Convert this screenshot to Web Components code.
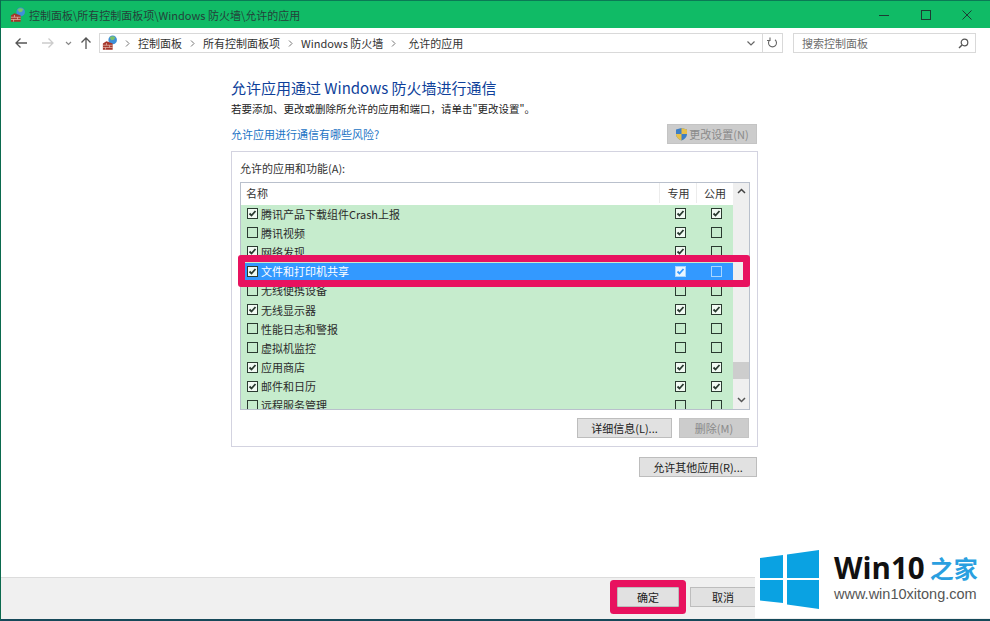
<!DOCTYPE html>
<html lang="zh">
<head>
<meta charset="utf-8">
<title>允许的应用</title>
<style>
  html, body { margin: 0; height: 100%; overflow: hidden; background: #fff; }
  body { font: 11px "Noto Sans CJK SC", "Liberation Sans", sans-serif; color: #222; }
</style>
</head>
<body>
<fw-window></fw-window>
<script>
const FONT = '"Noto Sans CJK SC", "Liberation Sans", sans-serif'

const FIREWALL_ICON = `
  <svg width="16" height="16" viewBox="0 0 18 18">
    <circle cx="12" cy="5.500" r="4.800" fill="#3f8fd8"/>
    <path d="M8.500 3c2-1.800 4.500-2 6.500-.2l-1.600 2.600-2.800.4z" fill="#7cc16a"/>
    <path d="M1 9.500l4-2.500 7 2.500V16.500H1z" fill="#a5352a"/>
    <path d="M1 11.500h11M1 14h11M5 9v2.500M8.500 11.500V14M4 14v2.500" stroke="#e6c3b4" stroke-width=".8" fill="none"/>
  </svg>`

class FwButton extends HTMLElement {
  constructor () {
    super()
    this.attachShadow({ mode: 'open' }).innerHTML = `
      <style>
        :host { display: inline-flex; align-items: center; justify-content: center; box-sizing: border-box;
          height: 20px; background: #e1e1e1; border: 1px solid #bdbdbd; font-size: 11px; color: #222; gap: 1px; }
        :host([disabled]) { background: #ccc; border-color: #c4c4c4; color: #8a8a8a; }
        :host([marked]) { box-shadow: 0 0 0 7px #e8125f; border-radius: 1px; }
      </style>
      <slot name="icon"></slot><slot></slot>`
  }
}
customElements.define('fw-button', FwButton)

class FwCheck extends HTMLElement {
  constructor () {
    super()
    const on = this.hasAttribute('on')
    this.attachShadow({ mode: 'open' }).innerHTML = `
      <style>
        :host { display: block; width: 11px; height: 11px; color: #2a3a30; }
        svg { display: block; }
      </style>
      <svg width="11" height="11" viewBox="0 0 11 11">
        <rect x=".5" y=".5" width="10" height="10" style="fill: ${on ? 'var(--box-fill, rgba(255,255,255,.75))' : 'none'}" stroke="currentColor"/>
        ${on ? '<path d="M2.500 5.500l2 2 4-4.500" fill="none" style="stroke: var(--tick, currentColor)" stroke-width="1.800"/>' : ''}
      </svg>`
  }
}
customElements.define('fw-check', FwCheck)

class FwRow extends HTMLElement {
  constructor () {
    super()
    const flag = (name) => this.getAttribute(name) === '1' ? 'on' : ''
    this.attachShadow({ mode: 'open' }).innerHTML = `
      <style>
        :host { display: grid; grid-template-columns: 1fr 37px 36px; align-items: center; height: 19.200px;
          box-sizing: border-box; padding-bottom: 2px; background: #c6eccd; color: #2b2b2b; white-space: nowrap; }
        :host([selected]) { background: #3399ff; color: #fff; }
        :host([selected]) fw-check.app { background: #c6eccd; color: #2a3a30; }
        :host([selected]) fw-check.col { color: #a9d6ff; --box-fill: #eaf5ff; --tick: #3399ff; }
        .name { display: flex; align-items: center; gap: 3px; padding-left: 6px; }
        fw-check.col { justify-self: center; margin-left: 3px; }
      </style>
      <div class="name"><fw-check class="app" ${flag('app')}></fw-check><slot></slot></div>
      <fw-check class="col" ${flag('a')}></fw-check>
      <fw-check class="col" ${flag('b')}></fw-check>`
  }
}
customElements.define('fw-row', FwRow)

class FwAppList extends HTMLElement {
  constructor () {
    super()
    this.attachShadow({ mode: 'open' }).innerHTML = `
      <style>
        :host { display: block; position: relative; box-sizing: border-box; height: 228px; border: 1px solid #b9c0cc; }
        .frame { display: grid; grid-template-columns: 1fr 16px; height: 100%; }
        .body { display: flex; flex-direction: column; overflow: hidden; min-width: 0; }
        .head { flex: none; display: grid; grid-template-columns: 1fr 37px 36px; height: 22px; box-sizing: border-box; padding-bottom: 2px; background: #fff; color: #333; }
        .head div { display: flex; align-items: center; justify-content: center; }
        .head div + div { box-shadow: -1px 0 0 #ececec; }
        .head div:first-child { justify-content: flex-start; padding-left: 5px; }
        .rows { flex: 1; overflow: hidden; }
        .bar { background: #efefef; display: flex; flex-direction: column; align-items: center; justify-content: space-between; padding: 5px 0 6px; box-sizing: border-box; }
        .thumb { width: 100%; height: 17px; background: #cdcdcd; margin: auto 0 18px; }
        .mark { position: absolute; left: -3px; right: -1px; top: 72px; height: 32px; box-sizing: border-box;
          border: 7px solid #e8125f; border-radius: 3px; }
      </style>
      <div class="frame">
        <div class="body">
          <div class="head"><div>名称</div><div>专用</div><div>公用</div></div>
          <div class="rows"><slot></slot></div>
        </div>
        <div class="bar">
          <svg width="9" height="6" viewBox="0 0 9 6"><path d="M1 5l3.500-3.500L8 5" fill="none" stroke="#444" stroke-width="1.500"/></svg>
          <div class="thumb"></div>
          <svg width="9" height="6" viewBox="0 0 9 6"><path d="M1 1l3.500 3.500L8 1" fill="none" stroke="#555" stroke-width="1.500"/></svg>
        </div>
      </div>
      <div class="mark"></div>`
  }
}
customElements.define('fw-app-list', FwAppList)

class FwTitleBar extends HTMLElement {
  constructor () {
    super()
    this.attachShadow({ mode: 'open' }).innerHTML = `
      <style>
        :host { flex: none; display: flex; align-items: center; height: 28px; box-sizing: border-box; border-top: 1px solid #0b7a55;
          background: #10bb66; color: #24413a; padding-left: 9px; gap: 3px; }
        .text { flex: 1; }
        .ctl { width: 41.500px; height: 27px; display: flex; align-items: center; justify-content: center; }
        .ctls { display: flex; margin-right: 2px; }
      </style>
      ${FIREWALL_ICON}
      <div class="text">控制面板\\所有控制面板项\\Windows 防火墙\\允许的应用</div>
      <div class="ctls">
        <div class="ctl"><svg width="10" height="10" viewBox="0 0 10 10"><path d="M0 5.500h10" stroke="#1d3b33"/></svg></div>
        <div class="ctl"><svg width="10" height="10" viewBox="0 0 10 10"><rect x=".5" y=".5" width="9" height="9" fill="none" stroke="#1d3b33"/></svg></div>
        <div class="ctl"><svg width="10" height="10" viewBox="0 0 10 10"><path d="M.5.5l9 9M9.500.5l-9 9" stroke="#1d3b33" fill="none"/></svg></div>
      </div>`
  }
}
customElements.define('fw-title-bar', FwTitleBar)

class FwNavBar extends HTMLElement {
  constructor () {
    super()
    const chev = '<svg class="sep" width="5" height="7" viewBox="0 0 5 7"><path d="M1 .5l3 3-3 3" fill="none" stroke="#777"/></svg>'
    this.attachShadow({ mode: 'open' }).innerHTML = `
      <style>
        :host { flex: none; display: flex; align-items: center; height: 30px; box-sizing: border-box; padding: 1px 14px 1px 13px; background: #fff; color: #333; }
        .nav { display: flex; align-items: center; width: 85px; flex: none; }
        .addr { flex: 1; height: 20px; box-sizing: border-box; border: 1px solid #d9d9d9; display: flex; align-items: center; padding-left: 2px; gap: 7px; }
        .crumbs { flex: 1; display: flex; align-items: center; gap: 8px; }
        .crumbs .last { margin-left: 4px; }
        .end { display: flex; align-items: center; justify-content: center; height: 100%; width: 19px; border-left: 1px solid #d9d9d9; }
        .search { width: 183px; height: 20px; margin-left: 10px; box-sizing: border-box; border: 1px solid #d9d9d9; display: flex; align-items: center; justify-content: space-between; padding: 0 6px 0 8px; color: #6d6d6d; }
      </style>
      <div class="nav">
        <svg width="14" height="12" viewBox="0 0 14 12" style="margin-right:13px"><path d="M13 6H2M6.500 1.500L2 6l4.500 4.500" fill="none" stroke="#555" stroke-width="1.300"/></svg>
        <svg width="14" height="12" viewBox="0 0 14 12" style="margin-right:10px"><path d="M1 6h11M7.500 1.500L12 6l-4.500 4.500" fill="none" stroke="#ccc" stroke-width="1.300"/></svg>
        <svg width="7" height="5" viewBox="0 0 7 5" style="margin-right:8px"><path d="M1 1l2.500 2.500L6 1" fill="none" stroke="#888" stroke-width="1.200"/></svg>
        <svg width="12" height="14" viewBox="0 0 12 14"><path d="M6 13V2M1.500 6.500L6 2l4.500 4.500" fill="none" stroke="#555" stroke-width="1.300"/></svg>
      </div>
      <div class="addr">
        ${FIREWALL_ICON}
        <div class="crumbs">
          ${chev}<span>控制面板</span>${chev}<span>所有控制面板项</span>${chev}<span>Windows 防火墙</span>${chev}<span class="last">允许的应用</span>
        </div>
        <svg width="8" height="5" viewBox="0 0 8 5"><path d="M.5 .5L4 4 7.500 .5" fill="none" stroke="#666" stroke-width="1.200"/></svg>
        <div class="end"><svg width="11" height="12" viewBox="0 0 11 12"><path d="M3 2.800a4 4 0 1 0 5 0M3 .5v3H0" fill="none" stroke="#666" stroke-width="1.100"/></svg></div>
      </div>
      <div class="search"><span>搜索控制面板</span>
        <svg width="11" height="11" viewBox="0 0 11 11"><circle cx="6.500" cy="4.500" r="3.300" fill="none" stroke="#555" stroke-width="1.200"/><path d="M4 7l-3 3" stroke="#555" stroke-width="1.500"/></svg>
      </div>`
  }
}
customElements.define('fw-nav-bar', FwNavBar)

class FwWatermark extends HTMLElement {
  constructor () {
    super()
    this.attachShadow({ mode: 'open' }).innerHTML = `
      <style>
        :host { position: absolute; right: 0; bottom: 1px; width: 235px; height: 75px; background: #fff; display: flex; align-items: center; box-sizing: border-box; padding: 0 0 3px 5px; gap: 15px; }
        .text { display: flex; flex-direction: column; margin-top: -3px; }
        .big { display: flex; align-items: center; gap: 5px; height: 31px; line-height: 31px; }
        .win { font: bold 29.500px/31px "Open Sans", "Liberation Sans", sans-serif; color: #111; }
        .cn { font: bold 24px/31px "Noto Sans CJK SC", sans-serif; color: #2a9fe0; }
        .url { font: 14.500px/17px "Liberation Sans", sans-serif; color: #555; margin-top: 3px; }
      </style>
      <svg width="59" height="59" viewBox="0 0 59 59">
        <path d="M0 8l23-3v23H0zM27 4.500L59 0v28H27zM0 30h23v23L0 50.500zM27 30h32v29l-32-4.500z" fill="#0aa2e2"/>
      </svg>
      <div class="text">
        <div class="big"><span class="win">Win10</span><span class="cn">之家</span></div>
        <div class="url">www.win10xitong.com</div>
      </div>`
  }
}
customElements.define('fw-watermark', FwWatermark)

const ROWS = [
  ['腾讯产品下载组件Crash上报', 1, 1, 1],
  ['腾讯视频', 0, 1, 0],
  ['网络发现', 1, 1, 0],
  ['文件和打印机共享', 1, 1, 0, true],
  ['无线便携设备', 0, 0, 0],
  ['无线显示器', 1, 1, 1],
  ['性能日志和警报', 0, 0, 0],
  ['虚拟机监控', 0, 0, 0],
  ['应用商店', 1, 1, 1],
  ['邮件和日历', 1, 1, 1],
  ['远程服务管理', 0, 0, 0]
]

class FwWindow extends HTMLElement {
  constructor () {
    super()
    const rows = ROWS.map(([name, app, a, b, sel]) =>
      `<fw-row app="${app}" a="${a}" b="${b}" ${sel ? 'selected' : ''}>${name}</fw-row>`).join('')
    this.attachShadow({ mode: 'open' }).innerHTML = `
      <style>
        :host { display: flex; flex-direction: column; position: relative; box-sizing: border-box; width: 990px; height: 621px;
          border-left: 1px solid #0b6a4e; border-bottom: 2px solid #16495a; font-family: ${FONT}; font-size: 11px; overflow: hidden; }
        main { flex: 1; display: flex; flex-direction: column; width: 527px; margin-left: 230px; padding-top: 21px; box-sizing: border-box; }
        h1 { margin: 0; font-size: 15px; font-weight: 400; line-height: 18px; color: #0e3f9a; }
        .desc { margin-top: 4px; line-height: 15px; color: #222; font-size: 10.500px; }
        .linkrow { display: flex; align-items: center; justify-content: space-between; margin-top: 8px; padding-right: 1px; }
        a { color: #1a73c4; text-decoration: none; }
        .group { margin-top: 7px; box-sizing: border-box; height: 296px; border: 1px solid #d3d3e0; padding: 9px 7px 0 8px; }
        .group label { display: block; line-height: 14px; margin-bottom: 7px; color: #333; }
        .btns { display: flex; justify-content: flex-end; gap: 7px; margin-top: 8px; padding-right: 1px; }
        .other { display: flex; justify-content: flex-end; margin-top: 10px; padding-right: 1px; }
        footer { flex: none; height: 42px; box-sizing: border-box; border-top: 1px solid #dcdcdc; background: #f0f0f0; display: flex; align-items: flex-start; justify-content: flex-end; padding: 9px 234px 0 0; gap: 11px; }
      </style>
      <fw-title-bar></fw-title-bar>
      <fw-nav-bar></fw-nav-bar>
      <main>
        <h1>允许应用通过 Windows 防火墙进行通信</h1>
        <div class="desc">若要添加、更改或删除所允许的应用和端口，请单击"更改设置"。</div>
        <div class="linkrow">
          <a>允许应用进行通信有哪些风险?</a>
          <fw-button disabled style="width:90px">
            <svg slot="icon" width="13" height="14" viewBox="0 0 13 14"><path d="M6.500 1l5.500 1.500V7c0 3-2.500 5.500-5.500 6.500C3.500 12.500 1 10 1 7V2.500z" fill="#3f7fc4"/><path d="M6.500 1l5.500 1.500V7H6.500zM6.500 7v6.500C3.500 12.500 1 10 1 7z" fill="#e8c04a"/></svg>
            更改设置(N)
          </fw-button>
        </div>
        <div class="group">
          <label>允许的应用和功能(A):</label>
          <fw-app-list>${rows}</fw-app-list>
          <div class="btns">
            <fw-button style="width:95px">详细信息(L)...</fw-button>
            <fw-button disabled style="width:70px">删除(M)</fw-button>
          </div>
        </div>
        <div class="other"><fw-button style="width:118px">允许其他应用(R)...</fw-button></div>
      </main>
      <footer>
        <fw-button marked style="width:62px">确定</fw-button>
        <fw-button style="width:66px">取消</fw-button>
      </footer>
      <fw-watermark></fw-watermark>`
  }
}
customElements.define('fw-window', FwWindow)
</script>
</body>
</html>
